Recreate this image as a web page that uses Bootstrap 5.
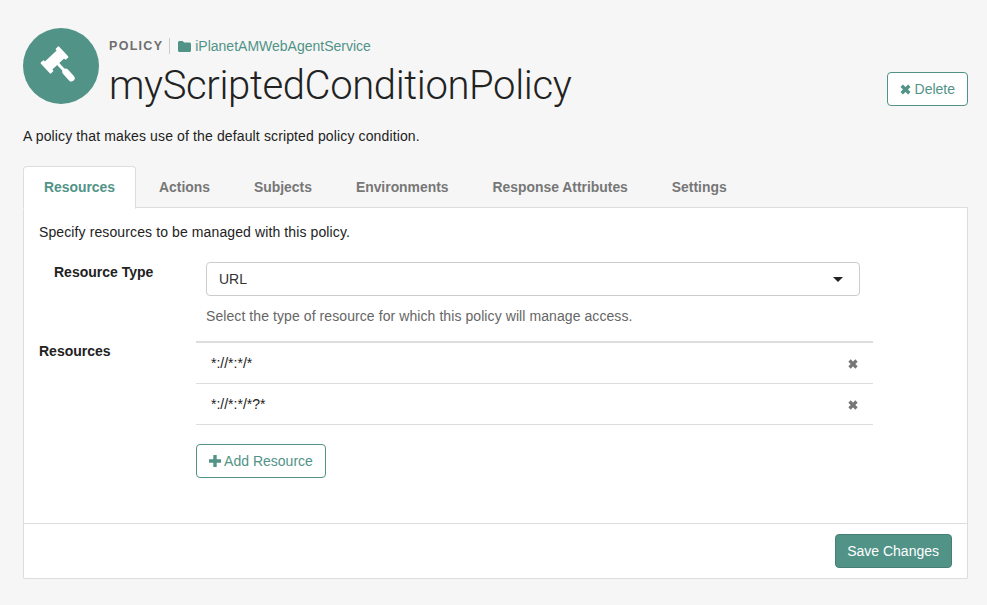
<!DOCTYPE html>
<html lang="en">
<head>
  <meta charset="UTF-8">
  <meta name="viewport" content="width=device-width, initial-scale=1.0">
  <title>myScriptedConditionPolicy</title>
  <link href="https://cdn.jsdelivr.net/npm/bootstrap@5.3.0/dist/css/bootstrap.min.css" rel="stylesheet">
  <style>
    body {
      background: #f6f6f6;
      color: #222;
      font-family: "Liberation Sans", Arial, sans-serif;
      font-size: 14px;
      line-height: 20px;
    }
    .page-wrap { padding: 28px 19px 0 23px; }
    .head-icon {
      width: 76px;
      height: 76px;
      background: #519387;
      border-radius: 50%;
      flex: none;
    }
    .head-text { margin-left: 10px; }
    .head-type {
      color: #6e6e6e;
      font-size: 12.500px;
      font-weight: 700;
      letter-spacing: 1.300px;
      padding-right: 6px;
      border-right: 1px solid #ccc;
      line-height: 16px;
    }
    .head-link { color: #519387; text-decoration: none; margin-left: 8px; font-size: 14px; }
    .head-title {
      font-family: Roboto, "Liberation Sans", sans-serif;
      font-weight: 300;
      font-size: 40px;
      letter-spacing: -.37px;
      line-height: 44px;
      margin: 8px 0 0;
      color: #222;
    }
    .btn-line {
      color: #519387;
      background: #fff;
      border: 1px solid #519387;
      border-radius: 4px;
      font-size: 14px;
      line-height: 20px;
      padding: 6px 12px;
    }
    .btn-line:hover { color: #519387; background: #fff; border-color: #519387; }
    .btn-fill {
      color: #fff;
      background: #519387;
      border: 1px solid #487f75;
      border-radius: 4px;
      font-size: 14px;
      line-height: 20px;
      padding: 6px 12px 6px 11px;
    }
    .delete-btn { margin-top: 44px; }
    .head-desc { margin: 18px 0 20px; letter-spacing: .13px; }
    .spec-note { letter-spacing: .11px; }
    .policy-tabs { border-bottom: 0; position: relative; z-index: 1; margin-bottom: -1px; }
    .policy-tabs .nav-link {
      color: #777;
      font-size: 13.900px;
      font-weight: 700;
      padding: 10px 20px 11px;
      margin-right: 2px;
      border: 1px solid transparent;
      border-radius: 4px 4px 0 0;
      line-height: 20px;
    }
    .policy-tabs .nav-link.active {
      color: #519387;
      background: #fff;
      border-color: #ddd #ddd #fff;
    }
    .policy-card {
      background: #fff;
      border: 1px solid #ddd;
      border-radius: 0 0 2px 2px;
      box-shadow: 0 1px 1px rgba(0,0,0,.05);
    }
    .policy-body { padding: 14px 15px 45px; height: 315px; }
    .policy-foot { border-top: 1px solid #ddd; padding: 10px 15px; text-align: right; }
    .field-label { font-weight: 700; }
    .type-row { margin-top: 20px; }
    .type-label { width: 167px; padding: 1px 0 0 15px; flex: none; line-height: 18px; }
    .res-label { width: 157px; flex: none; line-height: 18px; padding-top: 1px; }
    .type-select {
      width: 654px;
      height: 34px;
      border: 1px solid #ccc;
      border-radius: 4px;
      padding: 0 12px;
      color: #333;
      background: #fff;
      display: flex;
      align-items: center;
      justify-content: space-between;
    }
    .caret-down {
      width: 0;
      height: 0;
      border-left: 5px solid transparent;
      border-right: 5px solid transparent;
      border-top: 5px solid #222;
      margin-right: 4px;
    }
    .help-note { color: #666; margin: 10px 0 0; letter-spacing: .08px; }
    .res-row { margin-top: 15px; }
    .res-list { width: 677px; border-top: 2px solid #ddd; }
    .res-item {
      height: 41px;
      border-bottom: 1px solid #ddd;
      padding: 0 15px;
      display: flex;
      align-items: center;
      justify-content: space-between;
      font-size: 14px;
    }
    .res-item svg { margin-top: 2px; }
    .add-btn { margin-top: 19px; }
    .glyph { display: inline-block; vertical-align: -1px; }
  </style>
</head>
<body>
  <div class="page-wrap">
    <div class="d-flex justify-content-between">
      <div class="d-flex">
        <div class="head-icon d-flex align-items-center justify-content-center">
          <svg width="52" height="52" viewBox="0 0 52 52">
            <g fill="#fff" transform="rotate(-43 19.500 20)">
              <rect x="10" y="14.500" width="19" height="11"/>
              <rect x="7" y="12.500" width="4.500" height="15" rx="1"/>
              <rect x="27.500" y="12.500" width="4.500" height="15" rx="1"/>
              <rect x="18" y="24" width="3" height="10"/>
              <rect x="16.200" y="33" width="6.600" height="15" rx="3.200"/>
            </g>
          </svg>
        </div>
        <div class="head-text">
          <div class="d-flex align-items-center mt-2">
            <span class="head-type">POLICY</span>
            <a class="head-link" href="#">
              <svg class="glyph" width="13" height="11" viewBox="0 0 13 11"><path fill="#519387" d="M1.500 0h3.200l1.300 1.500h5.500c.8 0 1.500.7 1.500 1.500v6.500c0 .8-.7 1.500-1.500 1.500h-10C.7 11 0 10.300 0 9.500v-8C0 .7.700 0 1.500 0z"/></svg>
              iPlanetAMWebAgentService
            </a>
          </div>
          <h1 class="head-title">myScriptedConditionPolicy</h1>
        </div>
      </div>
      <div>
        <button type="button" class="btn btn-line delete-btn">
          <svg class="glyph" width="11" height="11" viewBox="0 0 11 11"><path d="M1.700 1.700l7.600 7.600M9.300 1.700l-7.600 7.600" stroke="#519387" stroke-width="3.400"/></svg>
          Delete
        </button>
      </div>
    </div>

    <p class="head-desc">A policy that makes use of the default scripted policy condition.</p>

    <ul class="nav nav-tabs policy-tabs">
      <li class="nav-item"><a class="nav-link active" href="#">Resources</a></li>
      <li class="nav-item"><a class="nav-link" href="#">Actions</a></li>
      <li class="nav-item"><a class="nav-link" href="#">Subjects</a></li>
      <li class="nav-item"><a class="nav-link" href="#">Environments</a></li>
      <li class="nav-item"><a class="nav-link" href="#">Response Attributes</a></li>
      <li class="nav-item"><a class="nav-link" href="#">Settings</a></li>
    </ul>

    <div class="policy-card">
      <div class="policy-body">
        <div class="spec-note">Specify resources to be managed with this policy.</div>
        <div class="d-flex type-row">
          <div class="field-label type-label">Resource Type</div>
          <div>
            <div class="type-select"><span>URL</span><span class="caret-down"></span></div>
            <p class="help-note">Select the type of resource for which this policy will manage access.</p>
          </div>
        </div>
        <div class="d-flex res-row">
          <div class="field-label res-label">Resources</div>
          <div>
            <div class="res-list">
              <div class="res-item"><span>*://*:*/*</span>
                <svg width="10" height="10" viewBox="0 0 10 10"><path d="M1.500 1.500l7 7M8.500 1.500l-7 7" stroke="#777" stroke-width="3.200"/></svg>
              </div>
              <div class="res-item"><span>*://*:*/*?*</span>
                <svg width="10" height="10" viewBox="0 0 10 10"><path d="M1.500 1.500l7 7M8.500 1.500l-7 7" stroke="#777" stroke-width="3.200"/></svg>
              </div>
            </div>
            <button type="button" class="btn btn-line add-btn">
              <svg class="glyph" width="12" height="12" viewBox="0 0 12 12"><path d="M6 0v12M0 6h12" stroke="#519387" stroke-width="3.400"/></svg>
              Add Resource
            </button>
          </div>
        </div>
      </div>
      <div class="policy-foot">
        <button type="button" class="btn btn-fill">Save Changes</button>
      </div>
    </div>
  </div>
  <script src="https://cdn.jsdelivr.net/npm/bootstrap@5.3.0/dist/js/bootstrap.bundle.min.js"></script>
</body>
</html>
